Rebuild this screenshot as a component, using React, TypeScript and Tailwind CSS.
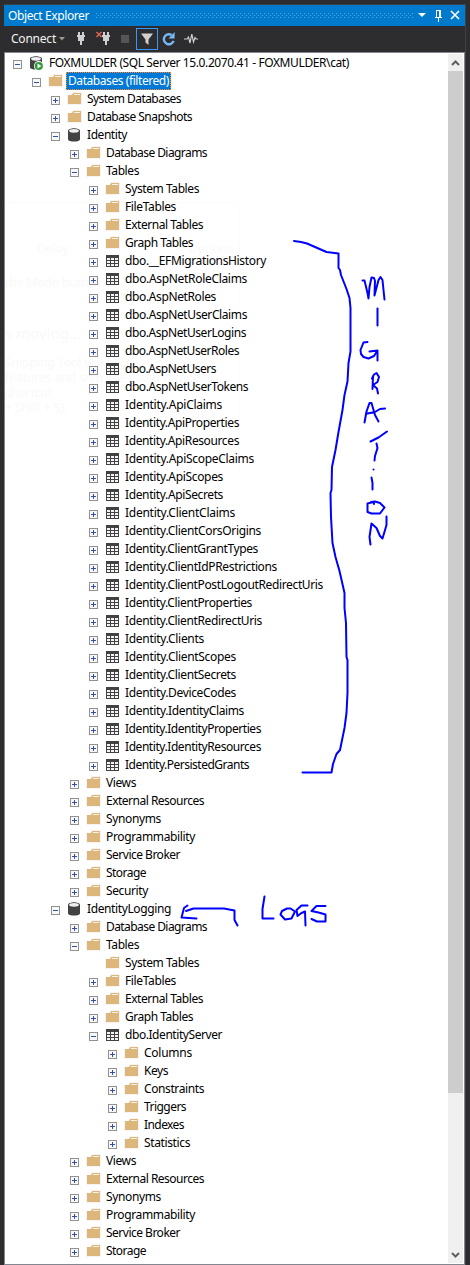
import React from "react";

type Kind = "server" | "folder" | "db" | "table";
type Node = [level: number, state: "+" | "-" | "", kind: Kind, label: string, width?: number];

const tables: [string, number][] = [
  ["dbo.__EFMigrationsHistory", 141],
  ["dbo.AspNetRoleClaims", 122],
  ["dbo.AspNetRoles", 91],
  ["dbo.AspNetUserClaims", 122],
  ["dbo.AspNetUserLogins", 121],
  ["dbo.AspNetUserRoles", 114],
  ["dbo.AspNetUsers", 91],
  ["dbo.AspNetUserTokens", 123],
  ["Identity.ApiClaims", 97],
  ["Identity.ApiProperties", 114],
  ["Identity.ApiResources", 114],
  ["Identity.ApiScopeClaims", 129],
  ["Identity.ApiScopes", 98],
  ["Identity.ApiSecrets", 98],
  ["Identity.ClientClaims", 110],
  ["Identity.ClientCorsOrigins", 136],
  ["Identity.ClientGrantTypes", 133],
  ["Identity.ClientIdPRestrictions", 152],
  ["Identity.ClientPostLogoutRedirectUris", 198],
  ["Identity.ClientProperties", 127],
  ["Identity.ClientRedirectUris", 137],
  ["Identity.Clients", 79],
  ["Identity.ClientScopes", 111],
  ["Identity.ClientSecrets", 111],
  ["Identity.DeviceCodes", 111],
  ["Identity.IdentityClaims", 119],
  ["Identity.IdentityProperties", 136],
  ["Identity.IdentityResources", 136],
  ["Identity.PersistedGrants", 124],
];

const nodes: Node[] = [
  [0, "-", "server", "FOXMULDER (SQL Server 15.0.2070.41 - FOXMULDER\\cat)", 300],
  [1, "-", "folder", "Databases (filtered)", 101],
  [2, "+", "folder", "System Databases", 94],
  [2, "+", "folder", "Database Snapshots", 105],
  [2, "-", "db", "Identity", 40],
  [3, "+", "folder", "Database Diagrams", 101],
  [3, "-", "folder", "Tables", 33],
  [4, "+", "folder", "System Tables", 74],
  [4, "+", "folder", "FileTables", 51],
  [4, "+", "folder", "External Tables", 78],
  [4, "+", "folder", "Graph Tables", 68],
  ...tables.map(([t, w]): Node => [4, "+", "table", t, w]),
  [3, "+", "folder", "Views", 30],
  [3, "+", "folder", "External Resources", 98],
  [3, "+", "folder", "Synonyms", 55],
  [3, "+", "folder", "Programmability", 89],
  [3, "+", "folder", "Service Broker", 74],
  [3, "+", "folder", "Storage", 40],
  [3, "+", "folder", "Security", 42],
  [2, "-", "db", "IdentityLogging", 84],
  [3, "+", "folder", "Database Diagrams", 101],
  [3, "-", "folder", "Tables", 33],
  [4, "", "folder", "System Tables", 74],
  [4, "+", "folder", "FileTables", 51],
  [4, "+", "folder", "External Tables", 78],
  [4, "+", "folder", "Graph Tables", 68],
  [4, "-", "table", "dbo.IdentityServer", 97],
  [5, "+", "folder", "Columns", 48],
  [5, "+", "folder", "Keys", 24],
  [5, "+", "folder", "Constraints", 60],
  [5, "+", "folder", "Triggers", 42],
  [5, "+", "folder", "Indexes", 40],
  [5, "+", "folder", "Statistics", 46],
  [3, "+", "folder", "Views", 30],
  [3, "+", "folder", "External Resources", 98],
  [3, "+", "folder", "Synonyms", 55],
  [3, "+", "folder", "Programmability", 89],
  [3, "+", "folder", "Service Broker", 74],
  [3, "+", "folder", "Storage", 40],
];

const indents = ["pl-[8px]", "pl-[27px]", "pl-[46px]", "pl-[65px]", "pl-[84px]", "pl-[103px]"];

/* Text whose tracking is adjusted so that it fills the given advance width. */
function Fitted({ text, width }: { text: string; width?: number }) {
  const ref = React.useRef<HTMLSpanElement>(null);
  const [spacing, setSpacing] = React.useState(0);
  React.useLayoutEffect(() => {
    if (ref.current && width) {
      const natural = ref.current.getBoundingClientRect().width;
      setSpacing((width - natural) / text.length);
    }
  }, [text, width]);
  return (
    <span ref={ref} className="inline-block whitespace-pre" style={{ letterSpacing: `${spacing}px` }}>
      {text}
    </span>
  );
}

function Expander({ state }: { state: "+" | "-" | "" }) {
  if (!state) return <span className="mt-[3px] size-[9px] shrink-0" />;
  return (
    <svg className="mt-[3px] size-[9px] shrink-0" viewBox="0 0 9 9" shapeRendering="crispEdges">
      <rect x=".5" y=".5" width="8" height="8" fill="#f8f8f8" stroke="#919191" />
      <path d="M2 4.5h5" stroke="#3450a0" />
      {state === "+" && <path d="M4.5 2v5" stroke="#3450a0" />}
    </svg>
  );
}

function Icon({ kind }: { kind: Kind }) {
  if (kind === "folder")
    return (
      <svg className="h-4 w-4 shrink-0" viewBox="0 0 16 16">
        <path d="M0 4h4l1-3h10v13H0z" fill="#f5f4f2" />
        <path d="M1 4h4l1.300-2H14v11H1z" fill="#dcb67a" />
        <path d="M7 3.500h6" stroke="#f7f1e6" strokeWidth="1" />
      </svg>
    );
  if (kind === "table")
    return (
      <svg className="h-4 w-4 shrink-0" viewBox="0 0 16 16" shapeRendering="crispEdges">
        <path d="M1 2h13v12H1z" fill="#424242" />
        <path
          d="M2 5h3v2H2zm4 0h3v2H6zm4 0h3v2h-3zM2 8h3v2H2zm4 0h3v2H6zm4 0h3v2h-3zM2 11h3v2H2zm4 0h3v2H6zm4 0h3v2h-3z"
          fill="#f4f4f4"
        />
      </svg>
    );
  return (
    <svg className="h-4 w-4 shrink-0 overflow-visible" viewBox="0 0 16 16">
      <path d="M1 4c0-3.6 12-3.6 12 0v8.200c0 3.200-12 3.200-12 0z" fill="#424242" />
      <ellipse cx="7" cy="3.800" rx="4.900" ry="1.900" fill="#f0eff1" />
      {kind === "server" && (
        <>
          <circle cx="9.800" cy="11" r="4.900" fill="#fff" />
          <circle cx="9.800" cy="11" r="4.100" fill="#2f9a3c" />
          <path d="M8.500 8.500v5L12.400 11z" fill="#fff" />
        </>
      )}
    </svg>
  );
}

function Plug({ cancel }: { cancel?: boolean }) {
  return (
    <svg className="h-4 w-4 overflow-visible" viewBox="0 0 16 16">
      <path
        d="M5 1h2v3h2V1h2v3h1v2h-1v4H9v4H7v-4H5V6H4V4h1z"
        fill="#d0d0d0"
        shapeRendering="crispEdges"
      />
      {cancel && <path d="M-1.500 1l5 5m0-5l-5 5" stroke="#e0644c" strokeWidth="1.500" />}
    </svg>
  );
}

function TitleBar() {
  return (
    <div className="flex h-[21px] items-center bg-[#007acc] text-white">
      <span className="w-[92px] shrink-0 pl-[4px] text-[12px] leading-[20px]">
        <Fitted text="Object Explorer" width={81} />
      </span>
      <svg className="h-[5px] w-[318px] shrink-0" shapeRendering="crispEdges">
        <defs>
          <pattern id="grip" width="4" height="4" patternUnits="userSpaceOnUse">
            <path d="M0 0h1v1H0zM2 2h1v1H2z" fill="#59a8de" />
          </pattern>
        </defs>
        <rect width="318" height="5" fill="url(#grip)" />
      </svg>
      <svg className="h-[21px] w-[52px] shrink-0" viewBox="0 0 52 21">
        <path d="M4 8h8l-4 4z" fill="#fff" />
        <path
          d="M22.500 5.500h4v7h-4zM21 12.500h7M25.500 5v7M24.500 13v4"
          fill="none"
          stroke="#fff"
          shapeRendering="crispEdges"
        />
        <path d="M37 6l8 8m0-8l-8 8" stroke="#fff" strokeWidth="1.700" />
      </svg>
    </div>
  );
}

function Toolbar() {
  return (
    <div className="flex h-[26px] items-center bg-[#2d2d30] text-[12px] text-[#f1f1f1]">
      <span className="w-[55px] pl-[7px] leading-[24px]">
        <Fitted text="Connect" width={45} />
      </span>
      <svg className="h-[4px] w-[6px]" viewBox="0 0 6 4">
        <path d="M0 0h6L3 3.500z" fill="#999" />
      </svg>
      <span className="ml-[8px]">
        <Plug />
      </span>
      <span className="ml-[9px]">
        <Plug cancel />
      </span>
      <span className="ml-[7px] size-[8px] bg-[#555558]" />
      <span className="ml-[7px] flex h-[22px] w-[22px] items-center justify-center border border-[#3399ff]">
        <svg className="h-[14px] w-[14px]" viewBox="0 0 14 14">
          <path d="M1 1.500h12L8.500 7.500V13l-3-2.500v-3z" fill="#d0d0d0" />
        </svg>
      </span>
      <svg className="ml-[3px] h-4 w-4" viewBox="0 0 16 16">
        <path d="M10.500 4A5 5 0 1 0 12.600 9.800" fill="none" stroke="#75b9f5" strokeWidth="2.400" />
        <path d="M13.600 1v6.500H7.500z" fill="#75b9f5" />
      </svg>
      <svg className="ml-[6px] h-4 w-4" viewBox="0 0 16 16">
        <path
          d="M1 8h3l1.500-2L7 12 8.800 3l1.700 8L12 6.500 13 8h2"
          fill="none"
          stroke="#d0d0d0"
          strokeWidth="1.200"
        />
      </svg>
    </div>
  );
}

function Scrollbar() {
  return (
    <div className="mt-px flex h-[1209px] w-[15px] shrink-0 flex-col bg-[#f0f0f0]">
      <svg className="h-[17px] w-[15px]" viewBox="0 0 15 17">
        <path d="M4 11l3.500-3.500L11 11" fill="none" stroke="#606060" strokeWidth="2" />
      </svg>
      <div className="h-[1022px] bg-[#cdcdcd]" />
      <div className="flex-1" />
      <svg className="h-[17px] w-[15px]" viewBox="0 0 15 17">
        <path d="M4 7l3.500 3.500L11 7" fill="none" stroke="#606060" strokeWidth="2" />
      </svg>
    </div>
  );
}

/* Remains of a window fading out behind the tree. */
function FadingWindow() {
  return (
    <div className="pointer-events-none absolute left-0 top-[149px] h-[268px] w-[235px] overflow-hidden whitespace-nowrap border-r border-t border-[#fcfcfc] text-[12px] leading-[15px] text-[#f9f9f9]">
      <div className="flex justify-between pl-[32px] pr-[6px] pt-[40px] leading-[12px]">
        <span>Delay</span>
        <span>Options</span>
      </div>
      <div className="pt-[20px]">the Mode button or</div>
      <div className="pt-[33px] text-[15px] leading-[20px]">s moving...</div>
      <div className="pt-[12px]">Snipping Tool will be</div>
      <div>features and snip like usual with Snip</div>
      <div>shortcut</div>
      <div>+ Shift + S).</div>
    </div>
  );
}

function Ink() {
  return (
    <svg
      className="pointer-events-none absolute left-0 top-0 h-[1265px] w-[470px]"
      viewBox="0 0 470 1265"
      fill="none"
      stroke="#0000ff"
      strokeWidth="2"
      strokeLinecap="round"
      strokeLinejoin="round"
    >
      <path d="M294 241 301 242 307 243.500 326.500 252 338.500 253.500V268L340 270 341 275 346.500 289 349.500 298 350.500 308V351.500L348.500 363 347.500 381.500 344.500 395 342.500 410 338.500 432 335.500 450 332 467 331.500 490 330.500 493 331 517 332.500 543 335.500 557 339.500 571 344.500 593V608L346 623 346.500 657 347.500 660V693L346.500 713 344.500 728 340 750 336.500 754 333 764 331.500 772.500H302.500" />
      <path d="M362.500 280.500H364.500L367.500 293 368.500 298.500 369.500 287 371.500 277.500 374 278 375 281 374.500 295.500 378.500 280 380.500 277 382.500 280 383.500 290 384.500 299.500" />
      <path d="M377.500 308.500V325.500" />
      <path d="M367.500 342 363.500 342.500 360.500 350 361 354 363.500 357 368.500 358.500 374 356 377.500 350.500 369.500 351.500M377.500 351V360.500" />
      <path d="M373 376.500 372.500 389M372 378.500 374 374.500 376.500 373 379 377 377.500 382 373 385 377 388.500 378 393.500" />
      <path d="M364.500 422.500 366.500 411.500 369.500 403H371.500L375 415 378.500 421.500M367.500 413.500 375 412 380 409 385 408.500" />
      <path d="M370.500 441.500 378.500 437.500 387 431.500M376.500 443.500 377.500 448 375 456 374.500 460.500" />
      <path d="M373.500 469.500V469.600M371.500 477.500 372.500 483V489.500" />
      <path d="M374 504 373.500 502 367.500 503.500V512L371.500 513.500H380L384.500 507.500 380 503 375 501.500 371 502" />
      <path d="M370.500 544.500 369.500 537 371.500 523.500 376.500 528 380 536 382.500 538.500 386.500 525V516.500" />
      <path d="M187.500 905.500 184 908 181.500 917.500 196.500 918.500M186 911 193.500 908.500H224L234.500 910.500V920L237.500 925.500" />
      <path d="M264.500 896.500 262.500 909V918.500H273.500" />
      <path d="M287 908.500 282 911 280.500 914.500 285 919.500 291.500 918.500 295 911.500 290.500 908.500Z" />
      <path d="M307.500 905.500 301.500 905.500 296.500 910 297.500 916 301.500 913 305 911.500 305.500 925.500" />
      <path d="M325.500 906H316.500L311.500 911 318.500 912.500 325.500 914.500V921.500H317L311.500 919" />
    </svg>
  );
}

export default function App() {
  return (
    <div className="relative flex h-[1265px] w-[470px] flex-col overflow-hidden bg-[#2d2d30] pl-[4px] pr-[4px] pt-[4px] font-['Noto_Sans','Open_Sans',sans-serif]">
      <div className="flex h-full flex-col border-r border-t border-[#3f3f46]">
        <TitleBar />
        <Toolbar />
        <div className="relative flex h-[1213px] justify-between border border-[#828790] bg-white">
          <FadingWindow />
          <div className="relative pt-[1px]">
            {nodes.map(([level, state, kind, label, width], i) => (
              <div key={i} className={`flex h-[18px] items-center ${indents[level]}`}>
                <Expander state={state} />
                <span className="ml-[7px]">
                  <Icon kind={kind} />
                </span>
                <span
                  className={
                    i === 1
                      ? "ml-[2px] h-[18px] border border-dotted border-[#ff8728] bg-[#0078d7] px-[1px] text-[12px] leading-[15px] text-white"
                      : "ml-[4px] h-[18px] text-[12px] leading-[17px] text-black"
                  }
                >
                  <Fitted text={label} width={width} />
                </span>
              </div>
            ))}
          </div>
          <div className="pr-[1px]">
            <Scrollbar />
          </div>
        </div>
      </div>
      <Ink />
    </div>
  );
}
